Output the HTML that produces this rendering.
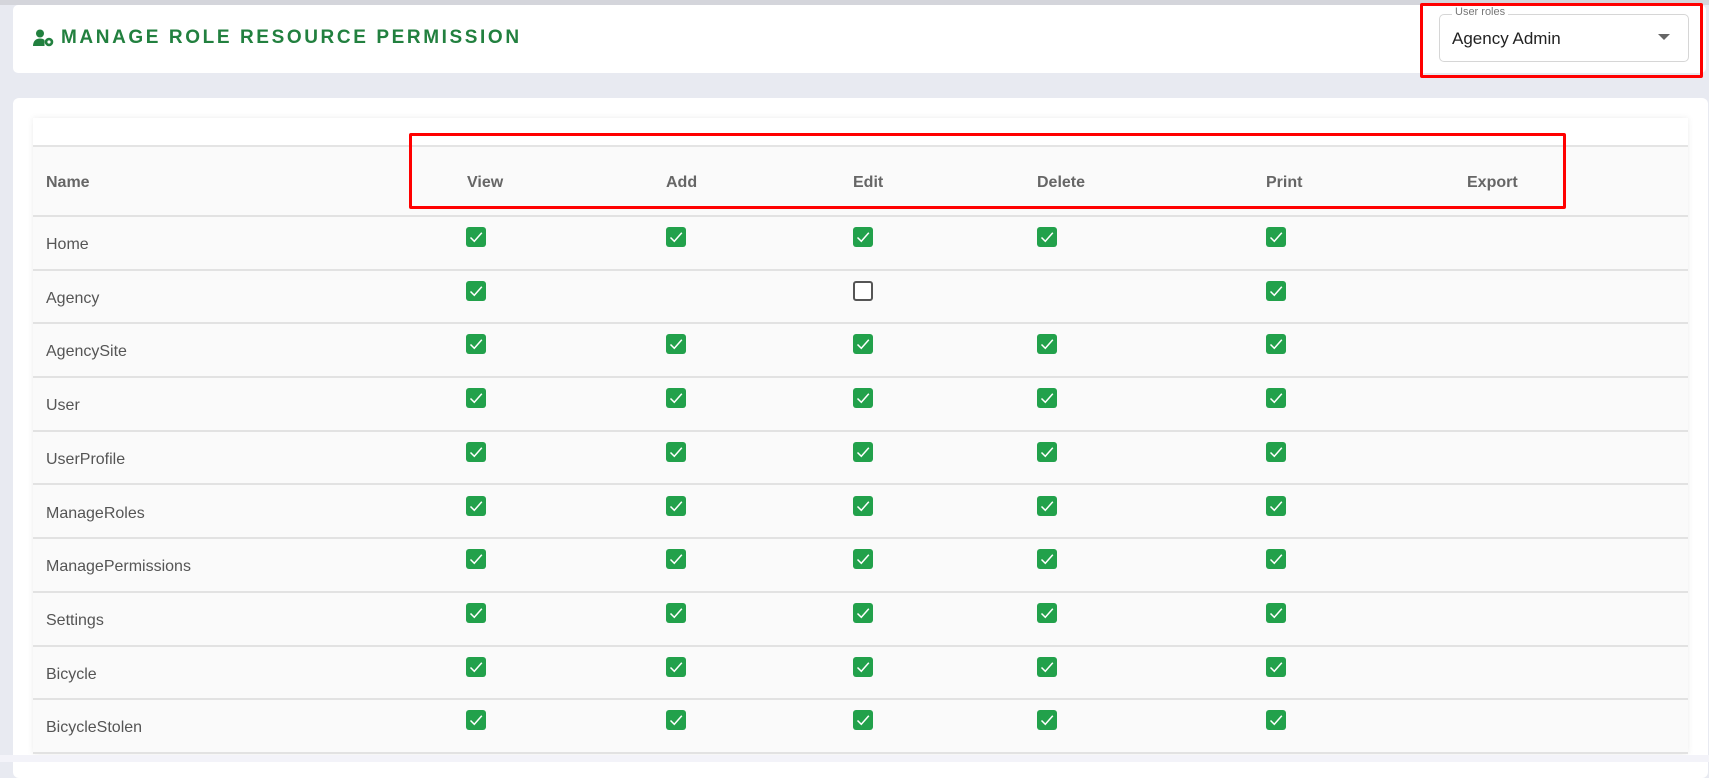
<!DOCTYPE html>
<html><head><style>
*{margin:0;padding:0;box-sizing:border-box}
body{width:1709px;height:762px;overflow:hidden;background:#e8eaf1;font-family:"Liberation Sans",sans-serif;position:relative}
.topbar{position:absolute;left:0;top:0;width:1709px;height:5px;background:#d4d5db}
.hcard{position:absolute;left:13px;top:5px;width:1693px;height:68px;background:#fff;border-radius:5px}
.title{position:absolute;left:61px;top:27px;font-size:19px;font-weight:bold;letter-spacing:2.6px;color:#22803f}
.sel{position:absolute;left:1439px;top:14px;width:250px;height:48px;border:1px solid #d6d6d6;border-radius:5px;background:#fff}
.sel .lab{position:absolute;left:12px;top:-9px;background:#fff;padding:0 3px;font-size:11px;color:#777}
.sel .val{position:absolute;left:12px;top:14px;font-size:17px;color:#222}
.sel .arr{position:absolute;right:18px;top:19px;width:0;height:0;border-left:6px solid transparent;border-right:6px solid transparent;border-top:6px solid #666}
.red{position:absolute;border:3px solid #f00;border-radius:2px}
.card{position:absolute;left:13px;top:98px;width:1695px;height:680px;background:#fff;border-radius:6px}
.tbl{position:absolute;left:33px;top:118px;width:1655px;height:636px;background:#fafafa;box-shadow:0 0 6px rgba(0,0,0,.08)}
.tbl .cap{position:absolute;left:0;top:0;width:100%;height:29px;background:#fff;border-bottom:2px solid #e4e4e4}
.row{position:absolute;left:0;width:100%;border-bottom:2px solid #e2e2e2}
.cell{position:absolute;font-size:16px;color:#555}
.hd{font-weight:bold;color:#666}
.cb{position:absolute;width:20px;height:20px;border-radius:3px;background:#22a14b}
.cb svg{position:absolute;left:0;top:0}
.cb.off{background:#fff;border:2px solid #555}
.bot{position:absolute;left:0;top:755px;width:1709px;height:7px;background:#f3f3f9}
</style></head><body>
<div class="topbar"></div>
<div class="hcard"></div>
<svg style="position:absolute;left:33px;top:29px" width="22" height="18" viewBox="0 0 22 18"><circle cx="7" cy="4.5" r="4" fill="#22803f"/><path d="M0 17c0-5 3-7.5 7-7.5 2 0 3.5.6 4.5 1.5V17z" fill="#22803f"/><circle cx="16" cy="13" r="4.3" fill="#22803f"/><circle cx="16" cy="13" r="1.6" fill="#fff"/></svg>
<div class="title">MANAGE ROLE RESOURCE PERMISSION</div>
<div class="sel"><span class="lab">User roles</span><span class="val">Agency Admin</span><span class="arr"></span></div>
<div class="red" style="left:1420px;top:3px;width:283px;height:75px"></div>
<div class="card"></div>
<div class="tbl">
<div class="cap"></div>
<div class="row" style="top:29px;height:70px"></div>
<div class="cell hd" style="left:13px;top:56px">Name</div>
<div class="cell hd" style="left:434px;top:56px">View</div>
<div class="cell hd" style="left:633px;top:56px">Add</div>
<div class="cell hd" style="left:820px;top:56px">Edit</div>
<div class="cell hd" style="left:1004px;top:56px">Delete</div>
<div class="cell hd" style="left:1233px;top:56px">Print</div>
<div class="cell hd" style="left:1434px;top:56px">Export</div>
<div id="rows"></div>
</div>
<div class="bot"></div>
<div class="red" style="left:409px;top:133px;width:1157px;height:76px"></div>
<script>
var names=["Home","Agency","AgencySite","User","UserProfile","ManageRoles","ManagePermissions","Settings","Bicycle","BicycleStolen"];
var xs=[433,633,820,1004,1233];
var h="";
var ck='<svg width="20" height="20" viewBox="0 0 20 20"><path d="M4.5 10.5l3.8 3.8L15.8 5.8" stroke="#fff" stroke-width="1.5" fill="none"/></svg>';
for(var i=0;i<names.length;i++){
 var t=99+i*53.7;
 h+='<div class="row" style="top:'+t+'px;height:53.7px"></div>';
 h+='<div class="cell" style="left:13px;top:'+(t+19)+'px">'+names[i]+'</div>';
 for(var j=0;j<5;j++){
  var st=(i==1)?(j==0||j==4?"on":(j==2?"off":"none")):"on";
  if(st=="none")continue;
  h+='<div class="cb'+(st=="off"?" off":"")+'" style="left:'+xs[j]+'px;top:'+(t+10)+'px">'+(st=="on"?ck:"")+'</div>';
 }
}
document.getElementById("rows").innerHTML=h;
</script>
</body></html>
